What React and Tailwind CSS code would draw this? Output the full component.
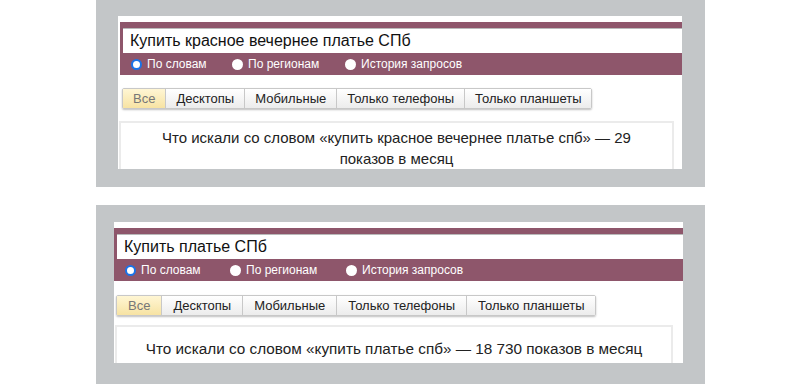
import React from "react";

function Radio({ checked, label, className = "" }) {
  return (
    <div className={"flex items-center gap-[5px] " + className}>
      {checked ? (
        <span className="w-[11px] h-[11px] rounded-full bg-white border-[2px] border-[#1a73e8] box-border" />
      ) : (
        <span className="w-[11px] h-[11px] rounded-full bg-white box-border" />
      )}
      <span className="text-[12px] text-white leading-none">{label}</span>
    </div>
  );
}

function Tabs({ pad }) {
  const tabs = ["Десктопы", "Мобильные", "Только телефоны", "Только планшеты"];
  return (
    <div className="flex h-[21px] border border-[#c8c8c8] rounded-[2px] shadow-[0_1px_2px_rgba(0,0,0,0.25)] w-max">
      <div className={pad + " flex items-center text-[13px] text-[#777] bg-gradient-to-b from-[#fff6d4] to-[#f7e3a3] border-r border-[#c8c8c8]"}>
        Все
      </div>
      {tabs.map((t, i) => (
        <div
          key={t}
          className={
            pad +
            " flex items-center text-[13px] text-[#222] bg-gradient-to-b from-white to-[#ececec]" +
            (i < tabs.length - 1 ? " border-r border-[#c8c8c8]" : "")
          }
        >
          {t}
        </div>
      ))}
    </div>
  );
}

function SearchBlock({ query, w1, w2 }) {
  return (
    <div className="bg-[#8e566b] pt-[6px] pl-[3px]">
      <div className="bg-white h-[25px] border-t border-[#b9b9b9] pl-[7px] flex items-center text-[16px] text-[#111]">
        {query}
      </div>
      <div className="h-[22px] flex items-center pl-[8px]">
        <Radio checked label="По словам" className={w1} />
        <Radio label="По регионам" className={w2} />
        <Radio label="История запросов" />
      </div>
    </div>
  );
}

export default function App() {
  return (
    <div
      className="w-[800px] h-[384px] bg-white overflow-hidden flex flex-col gap-[18px] pl-[96px]"
      style={{ fontFamily: '"Liberation Sans", Arial, sans-serif' }}
    >
      <div className="w-[609px] h-[187px] shrink-0 bg-[#c3c6c8] pt-[16px] pl-[22px]">
        <div className="w-[564px] h-[153px] bg-white overflow-hidden pt-[6px] pl-[2px]">
          <SearchBlock query="Купить красное вечернее платье СПб" w1="w-[101px]" w2="w-[113px]" />
          <div className="mt-[13px] ml-[2px]">
            <Tabs pad="px-[10px]" />
          </div>
          <div className="mt-[12px] ml-[-1px] w-[555px] h-[60px] border-2 border-[#ebebeb] pt-[4px] px-[40px] text-center text-[15px] leading-[21px] text-[#222]">
            Что искали со словом «купить красное вечернее платье спб» — 29 показов в месяц
          </div>
        </div>
      </div>
      <div className="w-[609px] h-[179px] shrink-0 bg-[#c3c6c8] pt-[17px] pl-[18px]">
        <div className="w-[569px] h-[141px] bg-white overflow-hidden pt-[6px]">
          <SearchBlock query="Купить платье СПб" w1="w-[105px]" w2="w-[116px]" />
          <div className="mt-[14px] ml-[2px]">
            <Tabs pad="px-[11px]" />
          </div>
          <div className="mt-[9px] ml-[1px] w-[558px] h-[60px] border-2 border-[#ebebeb] pt-[11px] px-[4px] text-center text-[15.3px] leading-[21px] text-[#222]">
            Что искали со словом «купить платье спб» — 18 730 показов в месяц
          </div>
        </div>
      </div>
    </div>
  );
}
